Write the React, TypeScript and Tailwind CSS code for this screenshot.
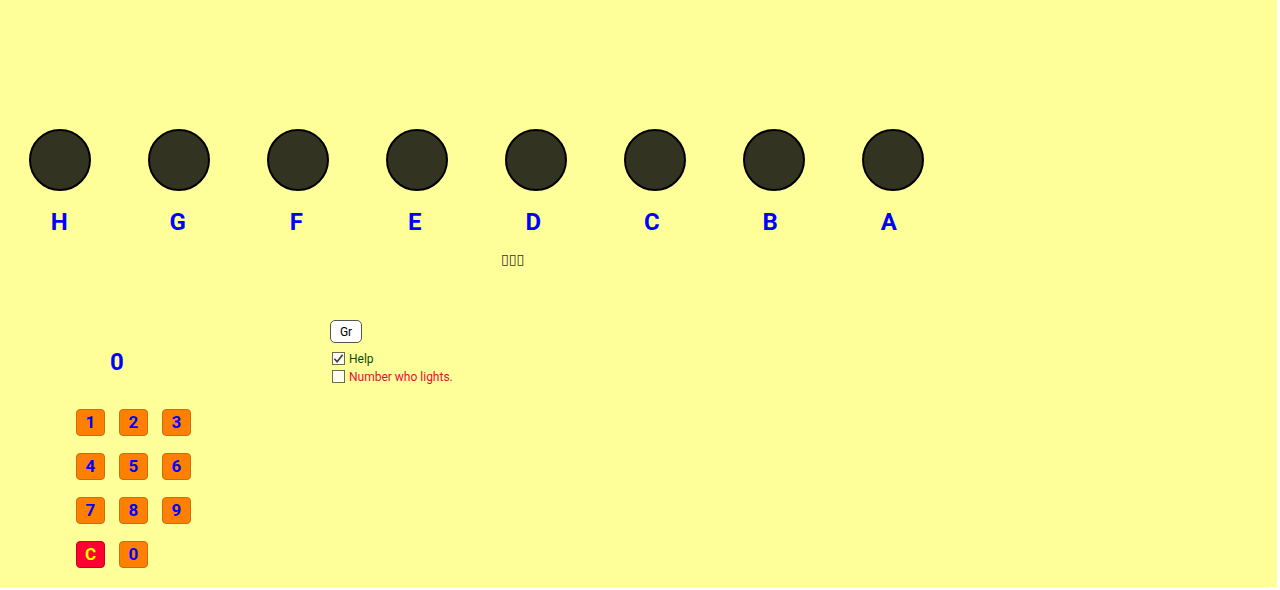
import React from "react";

const lamps = ["H", "G", "F", "E", "D", "C", "B", "A"];
const keys = ["1", "2", "3", "4", "5", "6", "7", "8", "9"];

function Key({ label, clear = false }: { label: string; clear?: boolean }) {
  return (
    <button
      className={
        clear
          ? "w-[29px] h-[27px] rounded-[4px] border border-[#c8002a] bg-[#ff0033] text-[#ffff00] text-[17px] font-bold leading-none flex items-center justify-center"
          : "w-[29px] h-[27px] rounded-[4px] border border-[#c87010] bg-[#ff8000] text-[#0000ff] text-[17px] font-bold leading-none flex items-center justify-center"
      }
    >
      {label}
    </button>
  );
}

export default function App() {
  return (
    <div className="w-[1277px] h-[587px] bg-[#ffff99] overflow-hidden font-['Roboto',sans-serif]">
      <div className="flex pt-[129px]">
        {lamps.map((l) => (
          <div key={l} className="w-[119px] flex justify-center">
            <div className="w-[62px] h-[62px] rounded-full bg-[#333322] border-2 border-black" />
          </div>
        ))}
      </div>
      <div className="flex mt-[19px]">
        {lamps.map((l) => (
          <div key={l} className="w-[118.5px] text-center text-[24px] font-bold leading-none text-[#0000ff]">
            {l}
          </div>
        ))}
      </div>
      <div className="mt-[18px] pl-[501px] h-[14px] text-[14px] leading-[14px] text-[#333333] font-['DejaVu_Sans',sans-serif]">
        ▯▯▯
      </div>

      <div className="flex mt-[54px]">
        <div className="ml-[76px] w-[254px]">
          <div className="mt-[30px] ml-[34px] text-[24px] font-bold leading-none text-[#0000ff]">0</div>
          <div className="mt-[35px] grid grid-cols-[29px_29px_29px] gap-x-[14px] gap-y-[17px]">
            {keys.map((k) => (
              <Key key={k} label={k} />
            ))}
            <Key label="C" clear />
            <Key label="0" />
          </div>
        </div>

        <div>
          <button className="w-[32px] h-[23px] rounded-[5px] border border-[#555555] bg-white text-[12px] leading-none text-black flex items-center justify-center">
            Gr
          </button>
          <div className="mt-[9px] ml-[2px] flex flex-col gap-[5px]">
            <label className="flex items-center gap-[4px] h-[13px] text-[12px] leading-none text-[#0b4a0b]">
              <span className="w-[13px] h-[13px] border border-[#6b6b55] bg-[#fffff0] flex items-center justify-center">
                <svg viewBox="0 0 12 12" className="w-[11px] h-[11px]">
                  <path d="M1.5 6.2 L4.5 9.5 L10.5 1.8" fill="none" stroke="#3a3a3a" strokeWidth="1.8" />
                </svg>
              </span>
              Help
            </label>
            <label className="flex items-center gap-[4px] h-[13px] text-[12px] leading-none text-[#e0103c]">
              <span className="w-[13px] h-[13px] border border-[#6b6b55] bg-[#fffff0]" />
              Number who lights.
            </label>
          </div>
        </div>
      </div>
    </div>
  );
}
